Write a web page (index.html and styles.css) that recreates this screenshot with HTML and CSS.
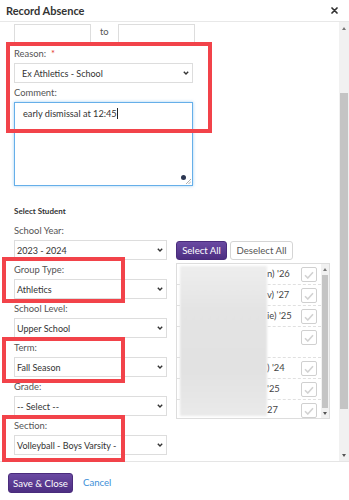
FILE: index.html
```html
<!DOCTYPE html>
<html lang="en">
<head>
  <meta charset="UTF-8" />
  <title>Record Absence</title>
  <link rel="stylesheet" href="styles.css">
</head>
<body>
  <div class="modal">
    <header class="modal-head">
      <h1>Record Absence</h1>
      <button class="close" aria-label="Close">
        <svg width="7" height="7" viewBox="0 0 7 7"><path d="M1 1L6 6M6 1L1 6" stroke="#333" stroke-width="1.7" stroke-linecap="round"/></svg>
      </button>
    </header>

    <div class="modal-body">
      <div class="body-content">
        <div class="date-row">
          <div class="text-input"></div>
          <span class="to">to</span>
          <div class="text-input"></div>
        </div>

        <div class="field">
          <label class="label">Reason: &nbsp;<span class="req">*</span></label>
          <div class="select select-wide">
            <span>Ex Athletics - School</span>
            <svg class="chev" width="6" height="4" viewBox="0 0 6 4"><path d="M0.8 0.8L3 3L5.2 0.8" fill="none" stroke="#333" stroke-width="1.4"/></svg>
          </div>
        </div>

        <div class="field">
          <label class="label">Comment:</label>
          <div class="textarea">
            <span>early dismissal at 12:45</span><span class="caret"></span>
            <span class="assist-dot"></span>
            <svg class="grip" width="5" height="5" viewBox="0 0 5 5"><path d="M5 0L0 5M5 2.5L2.5 5" stroke="#999" stroke-width="0.8"/></svg>
          </div>
        </div>

        <h2 class="section-title">Select Student</h2>

        <div class="student-grid">
          <div class="filters">
            <label class="label">School Year:</label>
            <div class="select"><span>2023 - 2024</span><svg class="chev" width="6" height="4" viewBox="0 0 6 4"><path d="M0.8 0.8L3 3L5.2 0.8" fill="none" stroke="#333" stroke-width="1.4"/></svg></div>
            <label class="label">Group Type:</label>
            <div class="select"><span>Athletics</span><svg class="chev" width="6" height="4" viewBox="0 0 6 4"><path d="M0.8 0.8L3 3L5.2 0.8" fill="none" stroke="#333" stroke-width="1.4"/></svg></div>
            <label class="label">School Level:</label>
            <div class="select"><span>Upper School</span><svg class="chev" width="6" height="4" viewBox="0 0 6 4"><path d="M0.8 0.8L3 3L5.2 0.8" fill="none" stroke="#333" stroke-width="1.4"/></svg></div>
            <label class="label">Term:</label>
            <div class="select"><span>Fall Season</span><svg class="chev" width="6" height="4" viewBox="0 0 6 4"><path d="M0.8 0.8L3 3L5.2 0.8" fill="none" stroke="#333" stroke-width="1.4"/></svg></div>
            <label class="label">Grade:</label>
            <div class="select"><span>-- Select --</span><svg class="chev" width="6" height="4" viewBox="0 0 6 4"><path d="M0.8 0.8L3 3L5.2 0.8" fill="none" stroke="#333" stroke-width="1.4"/></svg></div>
            <label class="label">Section:</label>
            <div class="select"><span>Volleyball - Boys Varsity -</span><svg class="chev" width="6" height="4" viewBox="0 0 6 4"><path d="M0.8 0.8L3 3L5.2 0.8" fill="none" stroke="#333" stroke-width="1.4"/></svg></div>
          </div>

          <div class="picker">
            <div class="picker-buttons">
              <button class="btn btn-purple btn-small">Select All</button>
              <button class="btn btn-plain">Deselect All</button>
            </div>
            <div class="student-list">
              <div class="rows">
                <div class="row"><span class="name">n) '26</span><span class="check"><svg width="10" height="8" viewBox="0 0 10 8"><path d="M1 4.2L3.8 7L9 1.2" fill="none" stroke="#d2d2d2" stroke-width="1.6"/></svg></span></div>
                <div class="row"><span class="name">v) '27</span><span class="check"><svg width="10" height="8" viewBox="0 0 10 8"><path d="M1 4.2L3.8 7L9 1.2" fill="none" stroke="#d2d2d2" stroke-width="1.6"/></svg></span></div>
                <div class="row"><span class="name">ie) '25</span><span class="check"><svg width="10" height="8" viewBox="0 0 10 8"><path d="M1 4.2L3.8 7L9 1.2" fill="none" stroke="#d2d2d2" stroke-width="1.6"/></svg></span></div>
                <div class="row row-tall"><span class="name"></span><span class="check"><svg width="10" height="8" viewBox="0 0 10 8"><path d="M1 4.2L3.8 7L9 1.2" fill="none" stroke="#d2d2d2" stroke-width="1.6"/></svg></span></div>
                <div class="row"><span class="name">) '24</span><span class="check"><svg width="10" height="8" viewBox="0 0 10 8"><path d="M1 4.2L3.8 7L9 1.2" fill="none" stroke="#d2d2d2" stroke-width="1.6"/></svg></span></div>
                <div class="row"><span class="name">'25</span><span class="check"><svg width="10" height="8" viewBox="0 0 10 8"><path d="M1 4.2L3.8 7L9 1.2" fill="none" stroke="#d2d2d2" stroke-width="1.6"/></svg></span></div>
                <div class="row"><span class="name">27</span><span class="check"><svg width="10" height="8" viewBox="0 0 10 8"><path d="M1 4.2L3.8 7L9 1.2" fill="none" stroke="#d2d2d2" stroke-width="1.6"/></svg></span></div>
              </div>
              <div class="scrollbar list-scroll">
                <span class="arrow up"></span>
                <div class="track"><div class="thumb"></div></div>
                <span class="arrow down"></span>
              </div>
              <div class="redacted"></div>
            </div>
          </div>
        </div>
      </div>

      <div class="scrollbar page-scroll">
        <span class="arrow up"></span>
        <div class="track"><div class="thumb"></div></div>
        <span class="arrow down"></span>
      </div>
    </div>

    <footer class="modal-foot">
      <button class="btn btn-purple btn-save">Save &amp; Close</button>
      <a class="cancel" href="#">Cancel</a>
    </footer>

    <div class="mark mark-reason"></div>
    <div class="mark mark-group"></div>
    <div class="mark mark-term"></div>
    <div class="mark mark-section"></div>
  </div>
</body>
</html>
```

FILE: styles.css
```css
* {
  box-sizing: border-box;
}

body {
  margin: 0;
  font-family: Lato, "Open Sans", sans-serif;
  color: #333;
  background: #fff;
}

.modal {
  position: relative;
  width: 349px;
  height: 500px;
  display: flex;
  flex-direction: column;
  overflow: hidden;
}

.modal-head {
  height: 22px;
  display: flex;
  align-items: center;
  justify-content: space-between;
  padding: 0 11px 0 6px;
  border-bottom: 1px solid #e8e8e8;
}

.modal-head h1 {
  margin: 0;
  font-size: 11px;
  font-weight: 700;
  color: #333;
}

.close {
  border: none;
  background: none;
  padding: 0;
  display: flex;
}

.modal-body {
  height: 439px;
  display: flex;
}

.body-content {
  flex: 1;
  padding: 2px 0 0 14px;
  overflow: hidden;
}

.date-row {
  display: flex;
  align-items: center;
  gap: 9px;
}

.text-input {
  width: 77px;
  height: 20px;
  border: 1px solid #ddd;
}

.to {
  font-size: 9.4px;
  color: #555;
  margin-top: -5px;
}

.label {
  display: block;
  font-size: 9.4px;
  line-height: 14px;
  padding-top: 3px;
  margin-bottom: 2px;
  color: #555;
}

.req {
  color: #e53935;
}

.select {
  width: 153px;
  height: 20px;
  border: 1px solid #ddd;
  display: flex;
  align-items: center;
  justify-content: space-between;
  padding: 0 3px 0 2px;
  font-size: 9px;
  color: #333;
  background: #fff;
}

.select-wide {
  width: 179px;
  padding-left: 7px;
}

.textarea {
  position: relative;
  width: 179px;
  height: 84px;
  border: 1px solid #66afe9;
  box-shadow: 0 0 3px rgba(102, 175, 233, 0.6);
  padding: 4px 8px;
  font-size: 9.2px;
  line-height: 14px;
  color: #333;
}

.caret {
  display: inline-block;
  width: 1px;
  height: 11px;
  background: #222;
  vertical-align: -2px;
}

.assist-dot {
  position: absolute;
  right: 6px;
  bottom: 5px;
  width: 5px;
  height: 5px;
  border-radius: 50%;
  background: #2c3752;
}

.grip {
  position: absolute;
  right: 1px;
  bottom: 1px;
}

.section-title {
  margin: 19px 0 4px;
  font-size: 8px;
  line-height: 12px;
  font-weight: 700;
  color: #333;
}

.student-grid {
  display: grid;
  grid-template-columns: 153px 154px;
  column-gap: 9px;
}

.picker {
  padding-top: 20px;
}

.picker-buttons {
  display: flex;
  gap: 3px;
}

.btn {
  font-family: inherit;
  font-size: 9.6px;
  height: 19px;
  border-radius: 3px;
  padding: 0;
  cursor: pointer;
}

.btn-purple {
  color: #fff;
  background: linear-gradient(#6a4aa2, #4d2e82);
  border: 1px solid #4a2c7c;
}

.btn-small {
  width: 51px;
}

.btn-plain {
  width: 63px;
  color: #555;
  background: #fff;
  border: 1px solid #d5d5d5;
}

.student-list {
  position: relative;
  margin-top: 3px;
  height: 156px;
  border: 1px solid #ddd;
  display: flex;
  overflow: hidden;
}

.rows {
  flex: 1;
}

.row {
  height: 21px;
  display: flex;
  justify-content: space-between;
  align-items: flex-start;
  padding: 3px 4px 0 90px;
  border-bottom: 1px dashed #e0e0e0;
  font-size: 9.4px;
  line-height: 14px;
  color: #444;
}

.row-tall {
  height: 31px;
}

.check {
  width: 16px;
  height: 15px;
  border: 1px solid #d0d0d0;
  border-radius: 2px;
  display: flex;
  align-items: center;
  justify-content: center;
  background: #fff;
}

.redacted {
  position: absolute;
  left: 3px;
  top: 2px;
  width: 87px;
  height: 150px;
  background: linear-gradient(#eeeeee, #e4e4e4 30%, #e2e2e2 70%, #eaeaea);
  filter: blur(1px);
}

.scrollbar {
  display: flex;
  flex-direction: column;
  background: #f1f1f1;
}

.scrollbar .track {
  flex: 1;
}

.scrollbar .arrow {
  height: 10px;
  display: flex;
  align-items: center;
  justify-content: center;
}

.scrollbar .arrow::after {
  content: "";
  border-left: 2px solid transparent;
  border-right: 2px solid transparent;
}

.scrollbar .up::after {
  border-bottom: 3px solid #777;
}

.scrollbar .down::after {
  border-top: 3px solid #555;
}

.list-scroll {
  width: 8px;
}

.list-scroll .thumb {
  margin: 1px 1px 0;
  height: 133px;
  background: #c4c4c4;
}

.page-scroll {
  width: 10px;
}

.page-scroll .arrow {
  height: 12px;
}

.page-scroll .thumb {
  margin: 59px 1px 0;
  height: 316px;
  background: #c4c4c4;
}

.modal-foot {
  flex: 1;
  border-top: 1px solid #e5e5e5;
  display: flex;
  align-items: flex-start;
  padding: 11px 8px 0;
  gap: 10px;
}

.btn-save {
  width: 65px;
  height: 20px;
}

.cancel {
  font-size: 9.6px;
  line-height: 20px;
  color: #3d8fd8;
  text-decoration: none;
}

.mark {
  position: absolute;
  border: 4px solid #f2434a;
  pointer-events: none;
}

.mark-reason {
  left: 6px;
  top: 42px;
  width: 206px;
  height: 91px;
}

.mark-group {
  left: 2px;
  top: 257px;
  width: 123px;
  height: 46px;
}

.mark-term {
  left: 2px;
  top: 337px;
  width: 123px;
  height: 46px;
}

.mark-section {
  left: 2px;
  top: 415px;
  width: 123px;
  height: 47px;
}
```
